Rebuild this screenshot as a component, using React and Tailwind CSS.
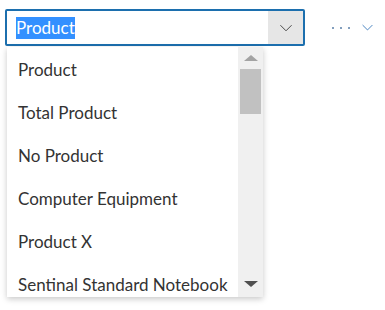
const items = [
  "Product",
  "Total Product",
  "No Product",
  "Computer Equipment",
  "Product X",
  "Sentinal Standard Notebook",
];

const Chevron = ({ className }) => (
  <svg viewBox="0 0 16 10" className={className} fill="none" stroke="currentColor" strokeWidth="1.2">
    <path d="M1 1.5 L8 8.5 L15 1.5" />
  </svg>
);

const App = () => {
  return (
    <div className="relative h-[310px] w-[385px] bg-white font-['Lato',sans-serif]">
      <div className="flex items-center pl-[5px] pt-[9px]">
        <div className="flex h-[37px] w-[300px] items-stretch rounded-[2px] border-2 border-[#1c6fae] bg-white">
          <div className="flex flex-1 items-center pl-[9px]">
            <span className="bg-[#3390ff] text-[17px] leading-[22px] text-white">Product</span>
          </div>
          <div className="flex w-[35px] items-center justify-center bg-[#e6e6e6] text-[#444]">
            <Chevron className="h-[8px] w-[14px]" />
          </div>
        </div>
        <div className="ml-[27px] flex items-center text-[#2b6fb5]">
          <span className="h-[2px] w-[2px] rounded-full bg-[#5a7fa8]" />
          <span className="ml-[6px] h-[2px] w-[2px] rounded-full bg-[#5a7fa8]" />
          <span className="ml-[6px] h-[2px] w-[2px] rounded-full bg-[#5a7fa8]" />
          <Chevron className="ml-[11px] h-[7px] w-[13px]" />
        </div>
      </div>

      <div className="absolute left-[7px] top-[47px] flex h-[250px] w-[256px] bg-white shadow-[0_2px_6px_rgba(0,0,0,0.22)]">
        <ul className="flex-1 overflow-hidden">
          {items.map((item) => (
            <li key={item} className="flex h-[43px] items-center whitespace-nowrap pl-[11px] pt-[3px] text-[17px] text-[#333]">
              {item}
            </li>
          ))}
        </ul>
        <div className="flex w-[25px] flex-col items-center bg-[#f0f0f0]">
          <div className="flex h-[22px] items-center justify-center">
            <span className="h-0 w-0 border-x-[7px] border-b-[6px] border-x-transparent border-b-[#a3a3a3]" />
          </div>
          <div className="h-[45px] w-[21px] bg-[#c1c1c1]" />
          <div className="flex-1" />
          <div className="flex h-[22px] items-center justify-center pb-[4px]">
            <span className="h-0 w-0 border-x-[7px] border-t-[6px] border-x-transparent border-t-[#505050]" />
          </div>
        </div>
      </div>
    </div>
  );
};

export default App;
